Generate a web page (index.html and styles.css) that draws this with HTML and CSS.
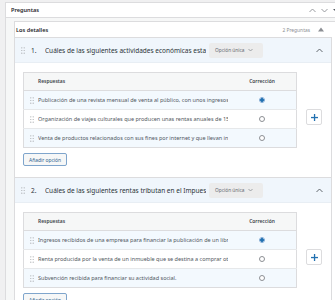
FILE: index.html
```html
<!DOCTYPE html>
<html lang="es">
<head>
    <meta charset="UTF-8">
    <meta name="viewport" content="width=device-width, initial-scale=1.0">
    <title>Preguntas</title>
    <link rel="stylesheet" href="styles.css">
</head>
<body>
    <div class="panel">
        <div class="panel-head">
            <span class="panel-title">Preguntas</span>
            <span class="panel-tools">
                <svg width="7" height="5" viewBox="0 0 7 5"><polyline points="0.5,4 3.5,1 6.5,4" fill="none" stroke="#8c8f94" stroke-width="0.9"/></svg>
                <svg width="7" height="5" viewBox="0 0 7 5"><polyline points="0.5,1 3.5,4 6.5,1" fill="none" stroke="#8c8f94" stroke-width="0.9"/></svg>
                <svg width="6" height="5" viewBox="0 0 6 5"><polygon points="0,1 6,1 3,4" fill="#50575e"/></svg>
            </span>
        </div>

        <div class="panel-body">
            <div class="details">
                <div class="details-head">
                    <span class="details-title">Los detalles</span>
                    <span class="details-count">2 Preguntas</span>
                    <svg class="details-toggle" width="6" height="5" viewBox="0 0 6 5"><polygon points="0,4.5 6,4.5 3,0.5" fill="#8c8f94"/></svg>
                </div>

                <!-- Pregunta 1 -->
                <div class="question">
                    <div class="q-head">
                        <svg class="handle" width="4" height="7" viewBox="0 0 4 7"><g fill="#a7aaad"><circle cx="0.8" cy="0.8" r="0.6"/><circle cx="3.2" cy="0.8" r="0.6"/><circle cx="0.8" cy="3.5" r="0.6"/><circle cx="3.2" cy="3.5" r="0.6"/><circle cx="0.8" cy="6.2" r="0.6"/><circle cx="3.2" cy="6.2" r="0.6"/></g></svg>
                        <span class="q-num">1.</span>
                        <span class="q-title">Cuáles de las siguientes actividades económicas estarían exentas</span>
                        <span class="q-type">Opción única
                            <svg width="5" height="4" viewBox="0 0 5 4"><polyline points="0.5,1 2.5,3 4.5,1" fill="none" stroke="#8c8f94" stroke-width="0.8"/></svg>
                        </span>
                        <svg class="q-collapse" width="7" height="5" viewBox="0 0 7 5"><polyline points="0.5,4 3.5,1 6.5,4" fill="none" stroke="#50575e" stroke-width="0.9"/></svg>
                    </div>
                    <div class="q-body">
                        <div class="answers">
                            <table class="answer-table">
                                <thead>
                                    <tr><th class="col-text">Respuestas</th><th class="col-check">Corrección</th></tr>
                                </thead>
                                <tbody>
                                    <tr class="alt">
                                        <td class="col-text"><div class="answer"><svg class="handle" width="4" height="7" viewBox="0 0 4 7"><g fill="#a7aaad"><circle cx="0.8" cy="0.8" r="0.6"/><circle cx="3.2" cy="0.8" r="0.6"/><circle cx="0.8" cy="3.5" r="0.6"/><circle cx="3.2" cy="3.5" r="0.6"/><circle cx="0.8" cy="6.2" r="0.6"/><circle cx="3.2" cy="6.2" r="0.6"/></g></svg><span class="answer-text">Publicación de una revista mensual de venta al público, con unos ingresos anuales</span></div></td>
                                        <td class="col-check"><span class="radio checked"></span></td>
                                    </tr>
                                    <tr>
                                        <td class="col-text"><div class="answer"><svg class="handle" width="4" height="7" viewBox="0 0 4 7"><g fill="#a7aaad"><circle cx="0.8" cy="0.8" r="0.6"/><circle cx="3.2" cy="0.8" r="0.6"/><circle cx="0.8" cy="3.5" r="0.6"/><circle cx="3.2" cy="3.5" r="0.6"/><circle cx="0.8" cy="6.2" r="0.6"/><circle cx="3.2" cy="6.2" r="0.6"/></g></svg><span class="answer-text">Organización de viajes culturales que producen unas rentas anuales de 15.000 euros</span></div></td>
                                        <td class="col-check"><span class="radio"></span></td>
                                    </tr>
                                    <tr class="alt">
                                        <td class="col-text"><div class="answer"><svg class="handle" width="4" height="7" viewBox="0 0 4 7"><g fill="#a7aaad"><circle cx="0.8" cy="0.8" r="0.6"/><circle cx="3.2" cy="0.8" r="0.6"/><circle cx="0.8" cy="3.5" r="0.6"/><circle cx="3.2" cy="3.5" r="0.6"/><circle cx="0.8" cy="6.2" r="0.6"/><circle cx="3.2" cy="6.2" r="0.6"/></g></svg><span class="answer-text">Venta de productos relacionados con sus fines por internet y que llevan incorporado</span></div></td>
                                        <td class="col-check"><span class="radio"></span></td>
                                    </tr>
                                </tbody>
                            </table>
                            <div class="add-side">
                                <button class="plus-btn"><svg width="7" height="7" viewBox="0 0 7 7"><rect x="2.9" y="0" width="1.3" height="7" fill="#2271b1"/><rect x="0" y="2.9" width="7" height="1.3" fill="#2271b1"/></svg></button>
                            </div>
                        </div>
                        <button class="add-option">Añadir opción</button>
                    </div>
                </div>

                <!-- Pregunta 2 -->
                <div class="question">
                    <div class="q-head">
                        <svg class="handle" width="4" height="7" viewBox="0 0 4 7"><g fill="#a7aaad"><circle cx="0.8" cy="0.8" r="0.6"/><circle cx="3.2" cy="0.8" r="0.6"/><circle cx="0.8" cy="3.5" r="0.6"/><circle cx="3.2" cy="3.5" r="0.6"/><circle cx="0.8" cy="6.2" r="0.6"/><circle cx="3.2" cy="6.2" r="0.6"/></g></svg>
                        <span class="q-num">2.</span>
                        <span class="q-title">Cuáles de las siguientes rentas tributan en el Impuesto sobre Sociedades</span>
                        <span class="q-type">Opción única
                            <svg width="5" height="4" viewBox="0 0 5 4"><polyline points="0.5,1 2.5,3 4.5,1" fill="none" stroke="#8c8f94" stroke-width="0.8"/></svg>
                        </span>
                        <svg class="q-collapse" width="7" height="5" viewBox="0 0 7 5"><polyline points="0.5,4 3.5,1 6.5,4" fill="none" stroke="#50575e" stroke-width="0.9"/></svg>
                    </div>
                    <div class="q-body">
                        <div class="answers">
                            <table class="answer-table">
                                <thead>
                                    <tr><th class="col-text">Respuestas</th><th class="col-check">Corrección</th></tr>
                                </thead>
                                <tbody>
                                    <tr class="alt">
                                        <td class="col-text"><div class="answer"><svg class="handle" width="4" height="7" viewBox="0 0 4 7"><g fill="#a7aaad"><circle cx="0.8" cy="0.8" r="0.6"/><circle cx="3.2" cy="0.8" r="0.6"/><circle cx="0.8" cy="3.5" r="0.6"/><circle cx="3.2" cy="3.5" r="0.6"/><circle cx="0.8" cy="6.2" r="0.6"/><circle cx="3.2" cy="6.2" r="0.6"/></g></svg><span class="answer-text">Ingresos recibidos de una empresa para financiar la publicación de un libro</span></div></td>
                                        <td class="col-check"><span class="radio checked"></span></td>
                                    </tr>
                                    <tr>
                                        <td class="col-text"><div class="answer"><svg class="handle" width="4" height="7" viewBox="0 0 4 7"><g fill="#a7aaad"><circle cx="0.8" cy="0.8" r="0.6"/><circle cx="3.2" cy="0.8" r="0.6"/><circle cx="0.8" cy="3.5" r="0.6"/><circle cx="3.2" cy="3.5" r="0.6"/><circle cx="0.8" cy="6.2" r="0.6"/><circle cx="3.2" cy="6.2" r="0.6"/></g></svg><span class="answer-text">Renta producida por la venta de un inmueble que se destina a comprar otro</span></div></td>
                                        <td class="col-check"><span class="radio"></span></td>
                                    </tr>
                                    <tr class="alt">
                                        <td class="col-text"><div class="answer"><svg class="handle" width="4" height="7" viewBox="0 0 4 7"><g fill="#a7aaad"><circle cx="0.8" cy="0.8" r="0.6"/><circle cx="3.2" cy="0.8" r="0.6"/><circle cx="0.8" cy="3.5" r="0.6"/><circle cx="3.2" cy="3.5" r="0.6"/><circle cx="0.8" cy="6.2" r="0.6"/><circle cx="3.2" cy="6.2" r="0.6"/></g></svg><span class="answer-text">Subvención recibida para financiar su actividad social.</span></div></td>
                                        <td class="col-check"><span class="radio"></span></td>
                                    </tr>
                                </tbody>
                            </table>
                            <div class="add-side">
                                <button class="plus-btn"><svg width="7" height="7" viewBox="0 0 7 7"><rect x="2.9" y="0" width="1.3" height="7" fill="#2271b1"/><rect x="0" y="2.9" width="7" height="1.3" fill="#2271b1"/></svg></button>
                            </div>
                        </div>
                        <button class="add-option">Añadir opción</button>
                    </div>
                </div>
            </div>
        </div>
    </div>
</body>
</html>
```

FILE: styles.css
```css
body {
    margin: 0;
    background: #f0f0f1;
    font-family: "Noto Sans", "Open Sans", sans-serif;
    color: #1d2327;
    overflow: hidden;
}
.panel {
    margin: 2px 0 0 5px;
    border: 1px solid #dcdcde;
    border-right: none;
    background: #f6f7f7;
}
.panel-head {
    height: 14px;
    background: #fff;
    border-bottom: 1px solid #dcdcde;
    display: flex;
    align-items: center;
    padding-left: 5px;
}
.panel-title {
    font-size: 5.6px;
    font-weight: 600;
    flex: 1;
}
.panel-tools {
    display: flex;
    align-items: center;
    gap: 5px;
    margin-right: -4px;
}
.panel-tools svg {
    display: block;
}
.panel-body {
    padding: 3px 0 0 8px;
}
.details {
    background: #fff;
    border-left: 1px solid #dcdcde;
    border-top: 1px solid #dcdcde;
    padding-bottom: 20px;
}
.details-head {
    height: 15px;
    display: flex;
    align-items: center;
    padding-left: 1px;
}
.details-title {
    font-size: 5.6px;
    font-weight: 600;
    flex: 1;
}
.details-count {
    font-size: 4.9px;
    color: #8c8f94;
    margin-right: 8px;
}
.details-toggle {
    margin-right: 11px;
}
.question {
    border: 1px solid #dcdcde;
    margin-right: 3px;
    margin-left: -1px;
}
.question + .question {
    border-top: none;
}
.q-head {
    height: 24px;
    background: #f0f6fc;
    display: flex;
    align-items: center;
    padding-left: 6px;
    border-bottom: 1px solid #e8eef4;
}
.q-head .handle {
    margin-right: 6px;
    flex: none;
}
.q-num {
    font-size: 6.5px;
    width: 14px;
    flex: none;
    color: #2c3338;
}
.q-title {
    font-size: 6.5px;
    color: #2c3338;
    width: 161px;
    flex: none;
    white-space: nowrap;
    overflow: hidden;
    text-overflow: clip;
    margin-right: 3px;
}
.q-type {
    display: flex;
    align-items: center;
    flex: none;
    gap: 3px;
    height: 15px;
    padding: 0 10px 0 6px;
    background: #ececec;
    border-radius: 2px;
    font-size: 4.8px;
    color: #646970;
}
.q-collapse {
    margin-left: auto;
    margin-right: 8px;
}
.q-body {
    padding: 9px 0 11px 8px;
}
.answers {
    display: flex;
    align-items: flex-start;
}
.answer-table {
    width: 274px;
    border-collapse: collapse;
    border: 1px solid #dcdcde;
    table-layout: fixed;
    font-size: 5px;
    line-height: 1;
}
.answer-table th {
    height: 17px;
    padding: 0;
    background: #f6f7f7;
    font-size: 4.9px;
    font-weight: 600;
    color: #3c434a;
    border-bottom: 1px solid #dcdcde;
}
.answer-table th.col-text {
    text-align: left;
    padding-left: 14px;
}
.answer-table td {
    height: 18px;
    padding: 0;
    border-bottom: 1px solid #e6e8ea;
}
.answer-table tr:last-child td {
    border-bottom: none;
}
.answer-table tr.alt td {
    background: #f3f9fe;
}
.col-check {
    width: 68px;
    text-align: center;
}
.answer {
    display: flex;
    align-items: center;
    padding-left: 6px;
}
.answer .handle {
    margin-right: 4px;
    flex: none;
}
.answer-text {
    font-size: 5.5px;
    line-height: 8px;
    color: #50575e;
    white-space: nowrap;
    overflow: hidden;
    width: 198px;
}
.radio {
    display: inline-block;
    width: 6px;
    height: 6px;
    border: 0.8px solid #8c8f94;
    border-radius: 50%;
    vertical-align: middle;
    background: #fff;
    box-sizing: border-box;
}
.radio.checked {
    border-color: #8fb3d9;
    background: radial-gradient(circle, #2271b1 0 1.9px, #fff 2.2px);
}
.add-side {
    padding: 37px 0 0 9px;
}
.plus-btn {
    width: 16px;
    height: 16px;
    padding: 0;
    border: 1px solid #dcdcde;
    border-radius: 2px;
    background: #fff;
    display: flex;
    align-items: center;
    justify-content: center;
}
.add-option {
    display: block;
    margin-top: 5px;
    height: 13px;
    padding: 0 5px;
    background: #f6f7f7;
    border: 1px solid #7fa5cc;
    border-radius: 2px;
    font-family: inherit;
    font-size: 4.9px;
    color: #2c5e8e;
}
```
